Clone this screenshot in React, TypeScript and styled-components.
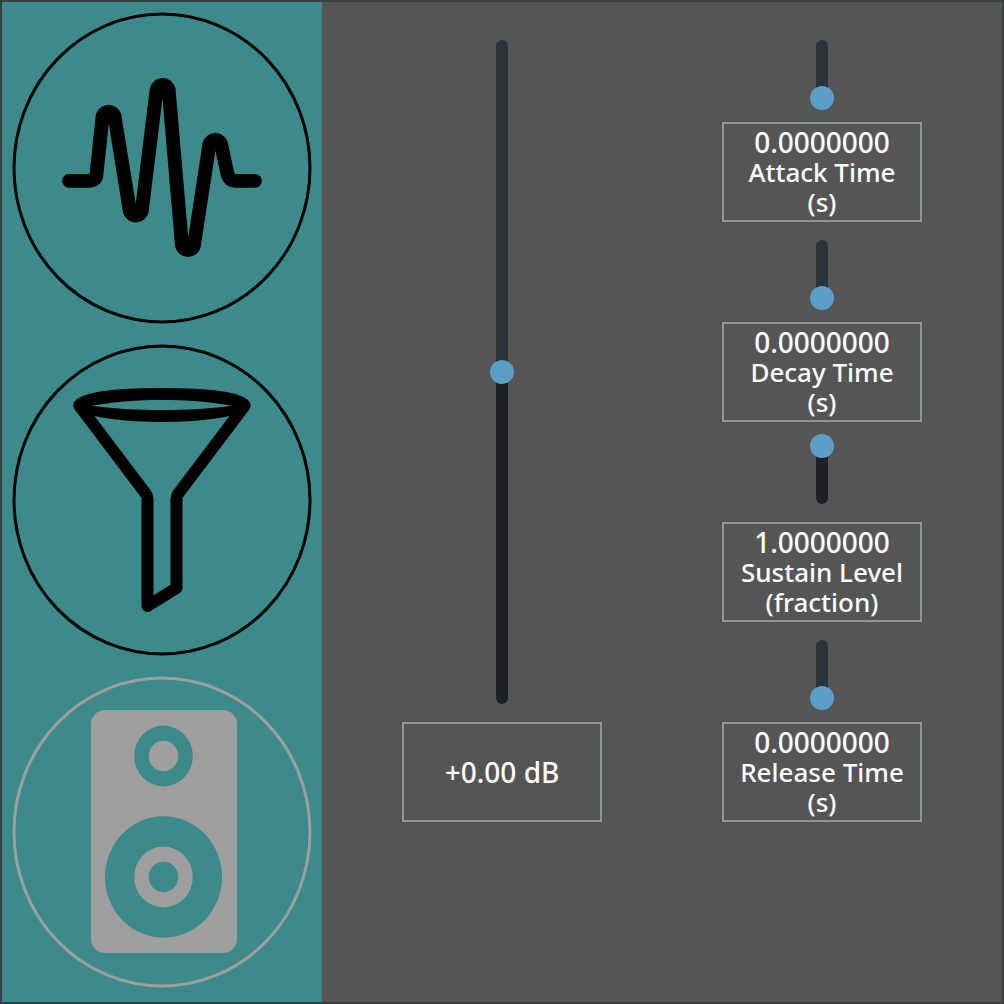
import React, { useState } from "react";
import styled, { createGlobalStyle } from "styled-components";

const colors = {
  frame: "#353f44",
  panel: "#555555",
  sidebar: "#3c8a8a",
  ink: "#000000",
  inactive: "#9e9e9e",
  outline: "#8e989b",
  rail: "#2a3338",
  railFill: "#1b2124",
  thumb: "#5c9fc6",
  text: "#ffffff",
};

const GlobalStyle = createGlobalStyle`
  *, *::before, *::after { box-sizing: border-box; }
  body {
    margin: 0;
    background: ${colors.panel};
    font-family: "Noto Sans", "Open Sans", sans-serif;
  }
`;

const Window = styled.div`
  display: grid;
  grid-template-columns: 320px 1fr;
  min-height: 100vh;
  border: 2px solid ${colors.frame};
  background: ${colors.panel};
`;

const Sidebar = styled.nav`
  display: flex;
  flex-direction: column;
  background: ${colors.sidebar};
`;

const TabButton = styled.button<{ $active: boolean }>`
  display: block;
  padding: 10px;
  border: 0;
  background: none;
  color: ${(p) => (p.$active ? colors.inactive : colors.ink)};
  cursor: pointer;
`;

const Icon = styled.svg`
  display: block;
  width: 100%;
  height: auto;
  fill: none;
  stroke: currentColor;
  stroke-linecap: round;
  stroke-linejoin: round;
`;

const Controls = styled.main`
  display: grid;
  grid-template-columns: 1fr 1fr;
  align-items: stretch;
  align-content: start;
  gap: 120px;
  padding: 20px 80px;
`;

const Column = styled.div`
  display: flex;
  flex-direction: column;
`;

const Control = styled.div`
  display: flex;
  flex: 1;
  flex-direction: column;
  align-items: center;
  gap: 12px;
  padding-top: 12px;
`;

const SliderArea = styled.div`
  display: grid;
  flex: 1;
  grid-template-columns: 24px;
  grid-template-rows: minmax(76px, 1fr);
  justify-items: center;
`;

const Rail = styled.div`
  grid-area: 1 / 1;
  width: 12px;
  margin: 6px 0;
  border-radius: 6px;
`;

const Range = styled.input`
  grid-area: 1 / 1;
  width: 24px;
  height: 0;
  min-height: 100%;
  margin: 0;
  appearance: none;
  background: transparent;
  writing-mode: vertical-lr;
  direction: rtl;
  cursor: pointer;

  &::-webkit-slider-runnable-track {
    width: 24px;
    background: transparent;
  }

  &::-webkit-slider-thumb {
    appearance: none;
    width: 24px;
    height: 24px;
    border-radius: 50%;
    background: ${colors.thumb};
  }
`;

const Readout = styled.label`
  display: flex;
  flex-direction: column;
  align-items: center;
  justify-content: center;
  width: 100%;
  height: 100px;
  border: 2px solid ${colors.outline};
  color: ${colors.text};
  font-size: 26px;
  font-weight: 500;
  line-height: 30px;
  white-space: nowrap;
`;

const Value = styled.span`
  font-size: 28px;
`;

function Ring() {
  return <ellipse cx="150" cy="156" rx="148" ry="154" strokeWidth="3" />;
}

function WaveIcon() {
  return (
    <Icon viewBox="0 0 300 312" aria-hidden="true">
      <Ring />
      <path
        strokeWidth="13.8"
        d="M57 168.800H78Q84 168.800 84.500 162L90.400 106A6.200 6.200 0 0 1 102.800 106L117.600 197.300A6.200 6.200 0 0 0 130 197.300L144.400 79.200A6.200 6.200 0 0 1 156.800 79.200L169.800 231.800A6.200 6.200 0 0 0 182.200 231.800L197.100 134.200A6.200 6.200 0 0 1 209.500 134.200L215.500 162Q217.500 168.800 223 168.800H243"
      />
    </Icon>
  );
}

function FunnelIcon() {
  return (
    <Icon viewBox="0 0 300 312" aria-hidden="true">
      <Ring />
      <g strokeWidth="12">
        <path
          d="M67.500 61C74 54 106 50 150 50S226 54 232.500 61C218 67 190 72 150 72S82 67 67.500 61Z"
          fill="currentColor"
        />
        <path d="M67.500 62L134 150Q135.500 152 135.500 155V262L164.500 244V155Q164.500 152 166 150L232.500 62" />
        <path
          d="M80 61.700C105 57.500 125 56 150 56S195 57.500 220 61.700C195 65 175 66 150 66S105 65 80 61.700Z"
          fill={colors.sidebar}
          stroke="none"
        />
      </g>
    </Icon>
  );
}

function SpeakerIcon() {
  return (
    <Icon viewBox="0 0 300 312" aria-hidden="true">
      <Ring />
      <g stroke="none">
        <rect x="79" y="34" width="146" height="243" rx="14" fill="currentColor" />
        <ellipse cx="151.500" cy="80" rx="29.300" ry="30.400" fill={colors.sidebar} />
        <ellipse cx="151.500" cy="80" rx="14.700" ry="15.300" fill="currentColor" />
        <ellipse cx="151.500" cy="201" rx="58.500" ry="60.700" fill={colors.sidebar} />
        <ellipse cx="151.500" cy="201" rx="29.300" ry="30.400" fill="currentColor" />
        <ellipse cx="151.500" cy="201" rx="14.700" ry="15.300" fill={colors.sidebar} />
      </g>
    </Icon>
  );
}

interface SliderProps {
  id: string;
  min: number;
  max: number;
  step: number;
  initial: number;
  name: string;
  format: (value: number) => string;
  caption?: string[];
}

function Slider({ id, min, max, step, initial, name, format, caption = [] }: SliderProps) {
  const [value, setValue] = useState(initial);
  const remaining = (max - value) / (max - min);
  const stop = `calc(6px + (100% - 12px) * ${remaining})`;
  return (
    <Control>
      <SliderArea>
        <Rail
          style={{
            background: `linear-gradient(${colors.rail} ${stop}, ${colors.railFill} ${stop})`,
          }}
        />
        <Range
          id={id}
          type="range"
          aria-label={name}
          min={min}
          max={max}
          step={step}
          value={value}
          onChange={(e) => setValue(Number(e.target.value))}
        />
      </SliderArea>
      <Readout htmlFor={id}>
        <Value>{format(value)}</Value>
        {caption.map((line) => (
          <span key={line}>{line}</span>
        ))}
      </Readout>
    </Control>
  );
}

const tabs = [
  { name: "Oscillator", Glyph: WaveIcon },
  { name: "Filter", Glyph: FunnelIcon },
  { name: "Output", Glyph: SpeakerIcon },
];

const envelope = [
  { id: "attack", name: "Attack Time", unit: "(s)", initial: 0 },
  { id: "decay", name: "Decay Time", unit: "(s)", initial: 0 },
  { id: "sustain", name: "Sustain Level", unit: "(fraction)", initial: 1 },
  { id: "release", name: "Release Time", unit: "(s)", initial: 0 },
];

const formatGain = (v: number) => `${v < 0 ? "-" : "+"}${Math.abs(v).toFixed(2)} dB`;
const formatLevel = (v: number) => v.toFixed(7);

export default function App() {
  const [active, setActive] = useState("Output");
  return (
    <>
      <GlobalStyle />
      <Window>
        <Sidebar>
          {tabs.map(({ name, Glyph }) => (
            <TabButton
              key={name}
              type="button"
              aria-label={name}
              aria-pressed={active === name}
              $active={active === name}
              onClick={() => setActive(name)}
            >
              <Glyph />
            </TabButton>
          ))}
        </Sidebar>
        <Controls>
          <Column>
            <Slider
              id="gain"
              name="Gain"
              min={-24}
              max={24}
              step={0.01}
              initial={0}
              format={formatGain}
            />
          </Column>
          <Column>
            {envelope.map(({ id, name, unit, initial }) => (
              <Slider
                key={id}
                id={id}
                name={name}
                min={0}
                max={1}
                step={0.001}
                initial={initial}
                format={formatLevel}
                caption={[name, unit]}
              />
            ))}
          </Column>
        </Controls>
      </Window>
    </>
  );
}
